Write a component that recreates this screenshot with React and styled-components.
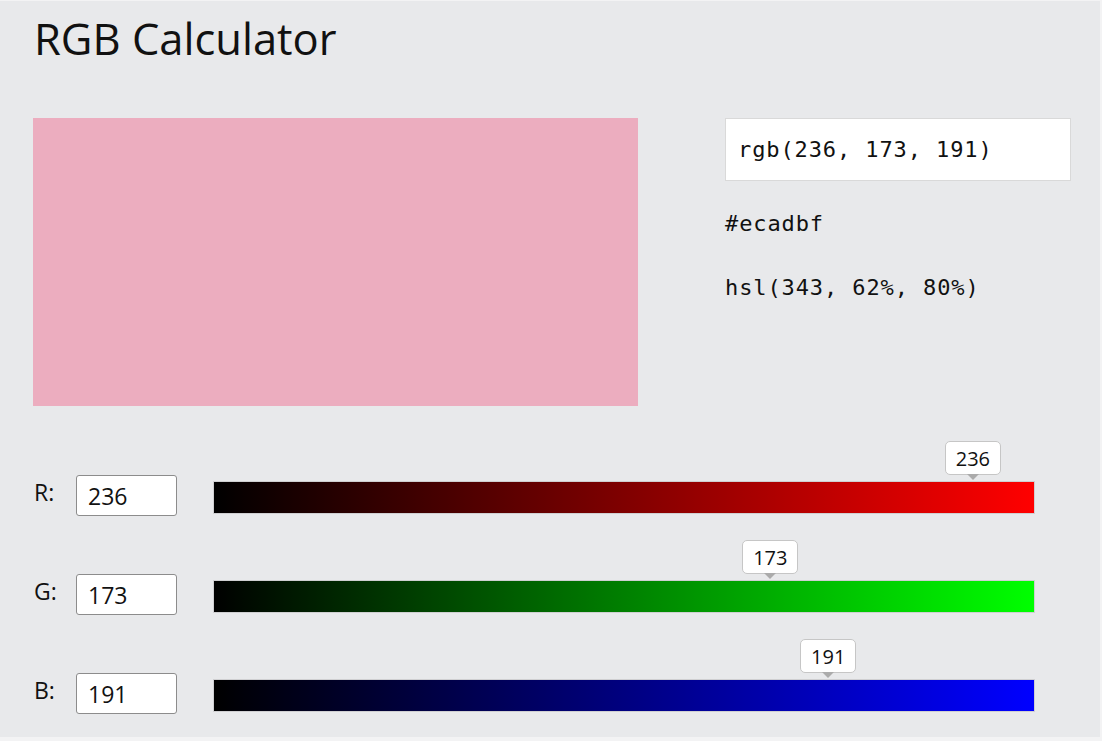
import React, { useState } from 'react';
import styled, { createGlobalStyle } from 'styled-components';

const Global = createGlobalStyle`
  html, body { margin: 0; padding: 0; background: #f3f3f4; }
  body { font-family: "Open Sans", "Noto Sans", sans-serif; color: #111; }
  * { box-sizing: border-box; }
`;

const Page = styled.div`
  width: 1100px;
  height: 736px;
  margin-top: 1px;
  background: #e8e9eb;
  padding: 12px 0 0 33px;
  overflow: hidden;
`;

const Title = styled.h1`
  margin: 0 0 0 1px;
  font-size: 43.5px;
  font-weight: 400;
  line-height: 52px;
  letter-spacing: 0;
`;

const Top = styled.div`
  display: flex;
  gap: 87px;
  margin-top: 53px;
`;

const Swatch = styled.div`
  width: 605px;
  height: 288px;
  background: ${(p) => p.$color};
`;

const Info = styled.div`
  display: flex;
  flex-direction: column;
  width: 346px;
  font-family: "DejaVu Sans Mono", "Liberation Mono", monospace;
  font-size: 22px;
  letter-spacing: 0.9px;
`;

const OutputBox = styled.div`
  height: 63px;
  background: #fff;
  border: 1px solid #d9d9d9;
  padding-left: 12px;
  display: flex;
  align-items: center;
`;

const InfoLine = styled.div`
  line-height: 28px;
  margin-top: ${(p) => p.$gap}px;
`;

const Rows = styled.div`
  display: flex;
  flex-direction: column;
  gap: 58px;
  margin-top: 69px;
`;

const Row = styled.div`
  display: flex;
  align-items: center;
`;

const Label = styled.label`
  width: 43px;
  padding-left: 1px;
  font-size: 23px;
  margin-bottom: 8px;
`;

const NumInput = styled.input`
  width: 101px;
  height: 41px;
  border: 1px solid #8c8c8c;
  border-radius: 3px;
  background: #fff;
  font-family: "Open Sans", "Noto Sans", sans-serif;
  font-size: 23px;
  color: #111;
  padding: 0 0 0 11px;
  outline: none;
`;

const Track = styled.div`
  position: relative;
  width: 820px;
  height: 31px;
  margin: 4px 0 0 37px;
  background: linear-gradient(to right, #000, ${(p) => p.$end});
  box-shadow: 0 0 0 1px rgba(160, 160, 160, 0.35);
`;

const Range = styled.input`
  position: absolute;
  inset: 0;
  width: 100%;
  height: 100%;
  margin: 0;
  opacity: 0;
  cursor: pointer;
`;

const Bubble = styled.div`
  position: absolute;
  bottom: calc(100% + 7px);
  width: 56px;
  height: 34px;
  transform: translateX(-50%);
  background: #fff;
  border: 1px solid #c6c6c6;
  border-radius: 5px;
  display: flex;
  align-items: center;
  justify-content: center;
  font-size: 20px;
  pointer-events: none;
  &::after {
    content: "";
    position: absolute;
    top: 100%;
    left: 50%;
    transform: translateX(-50%);
    border-left: 6px solid transparent;
    border-right: 6px solid transparent;
    border-top: 6px solid #ababab;
  }
`;

const toHex = (n) => n.toString(16).padStart(2, '0');

function toHsl(r, g, b) {
  const rr = r / 255, gg = g / 255, bb = b / 255;
  const max = Math.max(rr, gg, bb), min = Math.min(rr, gg, bb);
  const l = (max + min) / 2;
  let h = 0, s = 0;
  if (max !== min) {
    const d = max - min;
    s = l > 0.5 ? d / (2 - max - min) : d / (max + min);
    if (max === rr) h = (gg - bb) / d + (gg < bb ? 6 : 0);
    else if (max === gg) h = (bb - rr) / d + 2;
    else h = (rr - gg) / d + 4;
    h *= 60;
  }
  return `hsl(${Math.round(h)}, ${Math.round(s * 100)}%, ${Math.round(l * 100)}%)`;
}

const channels = [
  { key: 'r', label: 'R:', end: '#ff0000' },
  { key: 'g', label: 'G:', end: '#00ff00' },
  { key: 'b', label: 'B:', end: '#0000ff' },
];

export default function App() {
  const [rgb, setRgb] = useState({ r: 236, g: 173, b: 191 });
  const set = (k, v) => {
    const n = Math.max(0, Math.min(255, parseInt(v, 10) || 0));
    setRgb((s) => ({ ...s, [k]: n }));
  };
  const css = `rgb(${rgb.r}, ${rgb.g}, ${rgb.b})`;
  const hex = `#${toHex(rgb.r)}${toHex(rgb.g)}${toHex(rgb.b)}`;

  return (
    <Page>
      <Global />
      <Title>RGB Calculator</Title>
      <Top>
        <Swatch $color={css} />
        <Info>
          <OutputBox>{css}</OutputBox>
          <InfoLine $gap={29}>{hex}</InfoLine>
          <InfoLine $gap={36}>{toHsl(rgb.r, rgb.g, rgb.b)}</InfoLine>
        </Info>
      </Top>
      <Rows>
        {channels.map((c) => (
          <Row key={c.key}>
            <Label htmlFor={`in-${c.key}`}>{c.label}</Label>
            <NumInput
              id={`in-${c.key}`}
              type="text"
              value={rgb[c.key]}
              onChange={(e) => set(c.key, e.target.value)}
            />
            <Track $end={c.end}>
              <Bubble style={{ left: `${(rgb[c.key] / 255) * 100}%` }}>{rgb[c.key]}</Bubble>
              <Range
                type="range"
                min="0"
                max="255"
                value={rgb[c.key]}
                onChange={(e) => set(c.key, e.target.value)}
              />
            </Track>
          </Row>
        ))}
      </Rows>
    </Page>
  );
}
